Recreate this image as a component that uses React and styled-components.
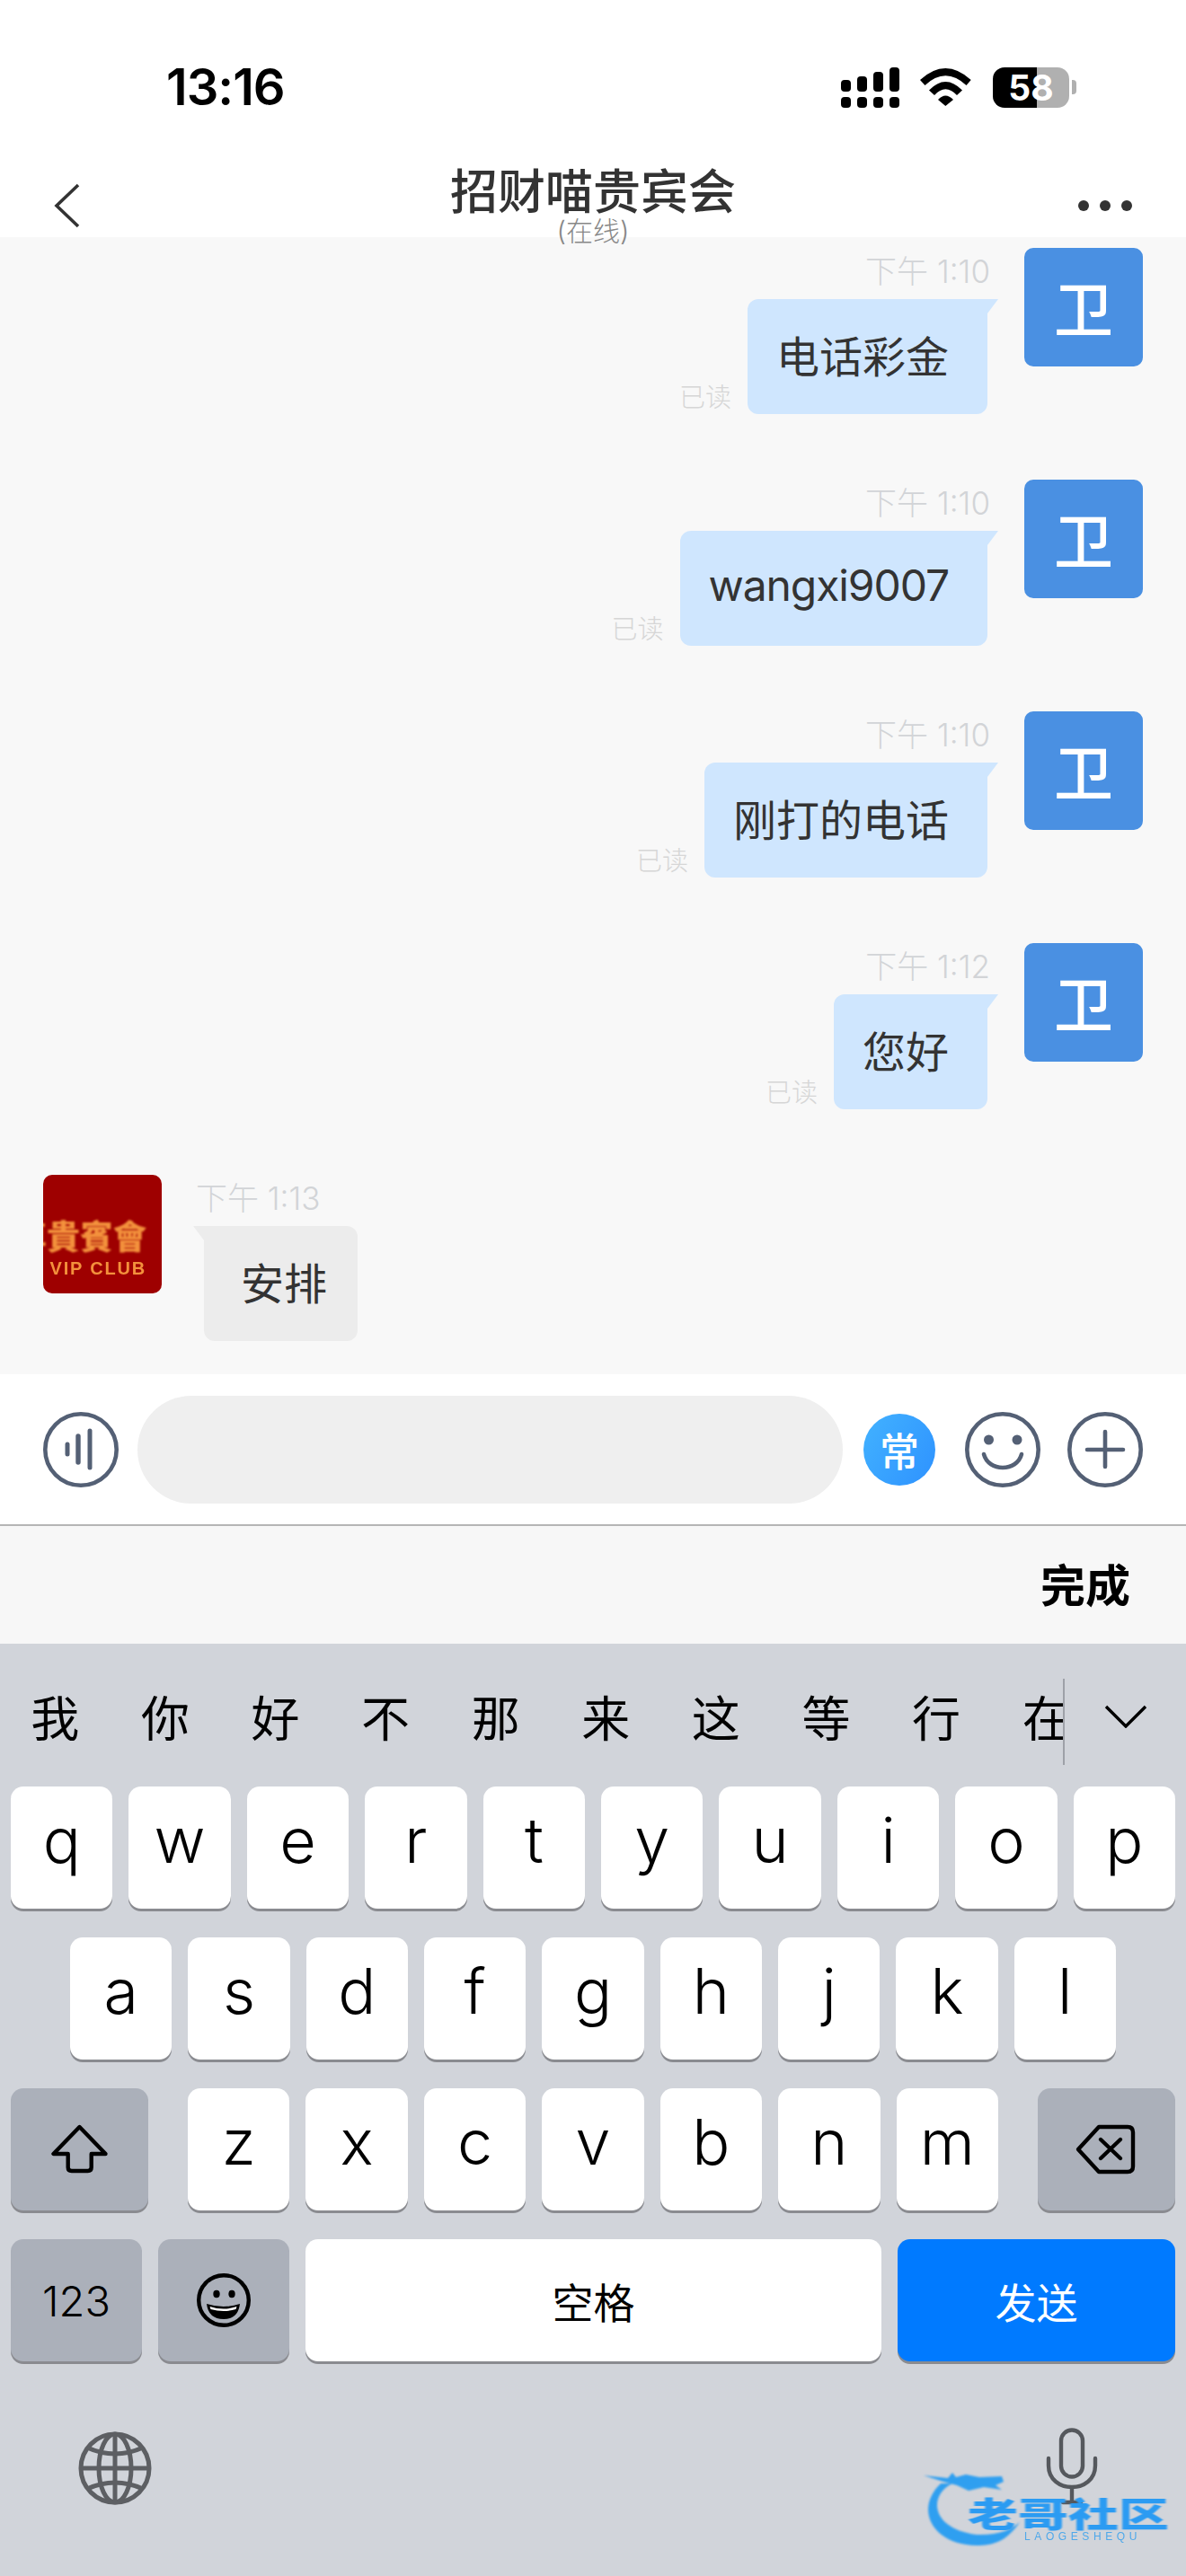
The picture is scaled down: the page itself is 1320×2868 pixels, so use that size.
import React from "react";
import styled, { createGlobalStyle } from "styled-components";

const CJK = `Inter, "Noto Sans CJK SC", sans-serif`;

const GlobalStyle = createGlobalStyle`
  html, body {
    margin: 0;
    padding: 0;
    background: #fff;
  }
  * {
    box-sizing: border-box;
  }
`;

const messages = [
    { id: 1, time: "下午 1:10", text: "电话彩金" },
    { id: 2, time: "下午 1:10", text: "wangxi9007", latin: true },
    { id: 3, time: "下午 1:10", text: "刚打的电话" },
    { id: 4, time: "下午 1:12", text: "您好" },
];

const candidates = ["我", "你", "好", "不", "那", "来", "这", "等", "行", "在"];

const App = () => {
    return (
        <>
            <GlobalStyle />
            <Page>
                <Header>
                    <StatusBar>
                        <Clock>13:16</Clock>
                        <StatusIcons>
                            <SignalBars>
                                {[13, 17, 22, 27].map((h) => (
                                    <SignalColumn key={h}>
                                        <SignalBar $h={h} />
                                        <SignalBar $h={12} />
                                    </SignalColumn>
                                ))}
                            </SignalBars>
                            <WifiIcon />
                            <BatteryWrap>
                                <Battery $level={58}>58</Battery>
                                <BatteryNub />
                            </BatteryWrap>
                        </StatusIcons>
                    </StatusBar>
                    <Nav>
                        <NavSide>
                            <svg width="30" height="50" viewBox="0 0 30 50" fill="none">
                                <path d="M27 2 L3 25 L27 48" stroke="#333" strokeWidth="3.6" />
                            </svg>
                        </NavSide>
                        <TitleBlock>
                            <Title>招财喵贵宾会</Title>
                            <Subtitle>(在线)</Subtitle>
                        </TitleBlock>
                        <NavSide $right>
                            <Dot />
                            <Dot />
                            <Dot />
                        </NavSide>
                    </Nav>
                </Header>

                <ChatList>
                    {messages.map((m) => (
                        <MessageRow key={m.id} $mine>
                            <MessageBody $mine>
                                <MessageTime>{m.time}</MessageTime>
                                <BubbleLine>
                                    <ReadMark>已读</ReadMark>
                                    <Bubble $mine $latin={m.latin}>
                                        {m.text}
                                    </Bubble>
                                </BubbleLine>
                            </MessageBody>
                            <Avatar>卫</Avatar>
                        </MessageRow>
                    ))}
                    <MessageRow>
                        <VipAvatar>
                            <VipName>尊貴賓會</VipName>
                            <VipClub>VIP CLUB</VipClub>
                        </VipAvatar>
                        <MessageBody>
                            <MessageTime>下午 1:13</MessageTime>
                            <BubbleLine>
                                <Bubble>安排</Bubble>
                            </BubbleLine>
                        </MessageBody>
                    </MessageRow>
                </ChatList>

                <InputBar>
                    <VoiceIcon />
                    <InputField />
                    <Coin>常</Coin>
                    <SmileIcon />
                    <PlusIcon />
                </InputBar>

                <DoneBar>完成</DoneBar>

                <Keyboard>
                    <CandidateRow>
                        <CandidateStrip>
                            {candidates.map((c) => (
                                <Candidate key={c}>{c}</Candidate>
                            ))}
                        </CandidateStrip>
                        <CandidateMore>
                            <svg width="48" height="26" viewBox="0 0 48 26" fill="none">
                                <path d="M2 2 L24 24 L46 2" stroke="#000" strokeWidth="3.4" />
                            </svg>
                        </CandidateMore>
                    </CandidateRow>

                    <KeyRows>
                        <KeyRow>
                            {"qwertyuiop".split("").map((k) => (
                                <LetterKey key={k}>{k}</LetterKey>
                            ))}
                        </KeyRow>
                        <KeyRow $inset={78}>
                            {"asdfghjkl".split("").map((k) => (
                                <LetterKey key={k}>{k}</LetterKey>
                            ))}
                        </KeyRow>
                        <KeyRow>
                            <FnKey $w={153} $mr={26}>
                                <ShiftIcon />
                            </FnKey>
                            {"zxcvbnm".split("").map((k) => (
                                <LetterKey key={k}>{k}</LetterKey>
                            ))}
                            <FnKey $w={153} $ml={26}>
                                <BackspaceIcon />
                            </FnKey>
                        </KeyRow>
                        <KeyRow>
                            <FnKey $w={146}>123</FnKey>
                            <FnKey $w={146}>
                                <EmojiIcon />
                            </FnKey>
                            <SpaceKey>空格</SpaceKey>
                            <SendKey>发送</SendKey>
                        </KeyRow>
                    </KeyRows>

                    <BottomRow>
                        <GlobeIcon />
                        <MicIcon />
                    </BottomRow>

                    <Watermark>
                        <DragonIcon />
                        <WatermarkName>老哥社区</WatermarkName>
                        <WatermarkLatin>LAOGESHEQU</WatermarkLatin>
                    </Watermark>
                </Keyboard>
            </Page>
        </>
    );
};

export default App;

//----> icons
const WifiIcon = () => (
    <svg width="58" height="44" viewBox="0 0 58 44" fill="#000">
        <path d="M0 14 Q28.3 -12 56.7 14 L51.5 20 Q28.3 -1.4 5.5 20 Z" />
        <path d="M10 25.5 Q28.3 6.5 47 25.5 L41 31 Q28.3 17.5 16 31 Z" />
        <path d="M20 36 Q28.3 27 37 36 L28.3 43 Z" />
    </svg>
);

const VoiceIcon = () => (
    <svg width="84" height="84" viewBox="0 0 84 84" fill="none" stroke="#546075" strokeLinecap="round">
        <circle cx="42" cy="42" r="39.7" strokeWidth="4.6" />
        <path d="M27 36 V47" strokeWidth="5" />
        <path d="M39 27 V56" strokeWidth="5.4" />
        <path d="M52 21 V62" strokeWidth="5" />
    </svg>
);

const SmileIcon = () => (
    <svg width="84" height="84" viewBox="0 0 84 84" fill="none" stroke="#546075" strokeLinecap="round">
        <circle cx="42" cy="42" r="39.7" strokeWidth="4.6" />
        <circle cx="26.5" cy="31" r="5.5" fill="#546075" stroke="none" />
        <circle cx="58" cy="31" r="5.5" fill="#546075" stroke="none" />
        <path d="M21 47 C26 67 58 67 63 47" strokeWidth="4.6" />
    </svg>
);

const PlusIcon = () => (
    <svg width="84" height="84" viewBox="0 0 84 84" fill="none" stroke="#546075" strokeLinecap="round">
        <circle cx="42" cy="42" r="39.7" strokeWidth="4.6" />
        <path d="M22 42 H62 M42 22 V61" strokeWidth="4.6" />
    </svg>
);

const ShiftIcon = () => (
    <svg width="64" height="56" viewBox="0 0 64 56" fill="none" stroke="#000" strokeWidth="4.4" strokeLinejoin="round">
        <path d="M31.5 3 L2.5 33 H18.7 V48 Q18.7 52 22.7 52 H40.7 Q44.7 52 44.7 48 V33 H60.5 Z" />
    </svg>
);

const BackspaceIcon = () => (
    <svg width="68" height="56" viewBox="0 0 68 56" fill="none" stroke="#000" strokeWidth="4.4" strokeLinejoin="round" strokeLinecap="round">
        <path d="M26 3 H58 Q64 3 64 9 V47 Q64 53 58 53 H26 L3 28 Z" />
        <path d="M28 17 L50 38 M50 17 L28 38" />
    </svg>
);

const EmojiIcon = () => (
    <svg width="62" height="62" viewBox="0 0 62 62" fill="none">
        <circle cx="31" cy="31" r="27.8" stroke="#000" strokeWidth="4.4" />
        <ellipse cx="23" cy="24" rx="3.7" ry="4.2" fill="#000" />
        <ellipse cx="40" cy="24" rx="3.7" ry="4.2" fill="#000" />
        <path d="M12 35 Q31 41 49 35 Q47 52 31 52 Q14 52 12 35 Z" fill="#000" />
        <path d="M15.5 38 Q31 43 45.5 38 L44.5 41 Q31 45 16.5 41 Z" fill="#fff" />
    </svg>
);

const GlobeIcon = () => (
    <svg width="82" height="82" viewBox="0 0 82 82" fill="none" stroke="#5d5f63" strokeWidth="5">
        <circle cx="41" cy="41" r="38" />
        <ellipse cx="41" cy="41" rx="18" ry="38" />
        <path d="M41 3 V79 M3 41 H79" />
        <path d="M10 18 Q41 32 72 18 M10 64 Q41 50 72 64" />
    </svg>
);

const MicIcon = () => (
    <svg width="58" height="86" viewBox="0 0 58 86" fill="none" stroke="#55585d" strokeWidth="4.4" strokeLinecap="round">
        <rect x="17" y="2.5" width="24" height="52" rx="12" />
        <path d="M3 34 V42 C3 74 55 74 55 42 V34" />
        <path d="M29 67 V83 M19 83 H39" />
    </svg>
);

const DragonIcon = () => (
    <DragonSvg width="130" height="95" viewBox="0 0 130 95" fill="#2f9ff0">
        <path d="M40 20 C14 32 14 70 67 77 C90 78 105 72 115 63 C100 85 85 89 67 89 C20 89 -4 50 27 20 Z" />
        <path d="M8 11 L35 14 L40 8 L44 13 L55 10 L70 13 L95 12 L97 18 L88 22 L95 27 L75 24 L58 28 L45 22 L30 18 Z" />
    </DragonSvg>
);

//----> layout
const Page = styled.div`
  width: 1320px;
  height: 2868px;
  overflow: hidden;
  display: flex;
  flex-direction: column;
  font-family: ${CJK};
  background: #fff;
`;

const Header = styled.header`
  height: 264px;
  flex: none;
  background: #fff;
  padding-top: 74px;
  position: relative;
  z-index: 1;
`;

const StatusBar = styled.div`
  height: 46px;
  padding: 0 122px 0 185px;
  display: flex;
  align-items: center;
  justify-content: space-between;
`;

const Clock = styled.div`
  font-size: 56px;
  font-weight: 600;
  letter-spacing: -1px;
  color: #000;
`;

const StatusIcons = styled.div`
  display: flex;
  align-items: center;
  gap: 23px;
`;

const SignalBars = styled.div`
  display: flex;
  gap: 7px;
`;

const SignalColumn = styled.div`
  width: 11px;
  height: 45px;
  display: flex;
  flex-direction: column;
  justify-content: flex-end;
  gap: 6px;
`;

const SignalBar = styled.div`
  height: ${(p) => p.$h}px;
  background: #000;
  border-radius: 4px;
`;

const BatteryWrap = styled.div`
  display: flex;
  align-items: center;
  gap: 3px;
`;

const Battery = styled.div`
  width: 85px;
  height: 45px;
  border-radius: 13px;
  background: linear-gradient(
    to right,
    #000 ${(p) => p.$level}%,
    #b0b0b0 ${(p) => p.$level}%
  );
  color: #fff;
  font-size: 39px;
  font-weight: 700;
  line-height: 45px;
  text-align: center;
`;

const BatteryNub = styled.div`
  width: 5px;
  height: 16px;
  background: #b0b0b0;
  border-radius: 0 4px 4px 0;
`;

const Nav = styled.div`
  margin-top: 66px;
  height: 78px;
  padding: 0 60px;
  display: grid;
  grid-template-columns: 1fr auto 1fr;
  align-items: start;
`;

const NavSide = styled.div`
  align-self: center;
  display: flex;
  align-items: center;
  justify-content: ${(p) => (p.$right ? "flex-end" : "flex-start")};
  gap: 12px;
`;

const Dot = styled.span`
  width: 12px;
  height: 12px;
  border-radius: 50%;
  background: #333;
`;

const TitleBlock = styled.div`
  text-align: center;
`;

const Title = styled.div`
  font-size: 53px;
  line-height: 56px;
  font-weight: 500;
  color: #333;
`;

const Subtitle = styled.div`
  font-size: 30px;
  line-height: 30px;
  font-weight: 300;
  color: #888;
`;

const ChatList = styled.main`
  height: 1266px;
  flex: none;
  background: #f8f8f8;
  padding-top: 12px;
  display: flex;
  flex-direction: column;
  gap: 73px;
`;

const MessageRow = styled.div`
  display: flex;
  justify-content: ${(p) => (p.$mine ? "flex-end" : "flex-start")};
  gap: ${(p) => (p.$mine ? 41 : 38)}px;
  padding: 0 48px;
`;

const MessageBody = styled.div`
  display: flex;
  flex-direction: column;
  align-items: ${(p) => (p.$mine ? "flex-end" : "flex-start")};
`;

const MessageTime = styled.div`
  height: 57px;
  padding-top: 6px;
  margin-right: -3px;
  font-size: 35px;
  line-height: 40px;
  font-weight: 300;
  color: #d2d4d7;
  white-space: nowrap;
`;

const BubbleLine = styled.div`
  display: flex;
  align-items: flex-end;
  gap: 18px;
`;

const ReadMark = styled.div`
  font-size: 29px;
  line-height: 40px;
  font-weight: 300;
  color: #d6d6d6;
  margin-bottom: -2px;
`;

const Bubble = styled.div`
  position: relative;
  height: 128px;
  padding: ${(p) => (p.$mine ? "0 43px 7px 32px" : "0 34px 7px 41px")};
  margin-left: ${(p) => (p.$mine ? 0 : 9)}px;
  display: flex;
  align-items: center;
  font-size: 48px;
  letter-spacing: ${(p) => (p.$latin ? "-1.1px" : "0")};
  font-weight: 400;
  color: #333;
  white-space: nowrap;
  background: ${(p) => (p.$mine ? "#cfe6fe" : "#ececec")};
  border-radius: ${(p) => (p.$mine ? "12px 0 12px 12px" : "0 12px 12px 12px")};

  &::after {
    content: "";
    position: absolute;
    top: 0;
    ${(p) => (p.$mine ? "right: -12px;" : "left: -12px;")}
    border-top: 16px solid ${(p) => (p.$mine ? "#cfe6fe" : "#ececec")};
    ${(p) =>
      p.$mine
        ? "border-right: 12px solid transparent;"
        : "border-left: 12px solid transparent;"}
  }
`;

const Avatar = styled.div`
  width: 132px;
  height: 132px;
  flex: none;
  padding-bottom: 4px;
  border-radius: 10px;
  background: #4a90e2;
  color: #fff;
  font-size: 66px;
  font-weight: 500;
  display: flex;
  align-items: center;
  justify-content: center;
`;

const VipAvatar = styled.div`
  width: 132px;
  height: 132px;
  flex: none;
  border-radius: 10px;
  background: #9e0000;
  overflow: hidden;
  padding: 48px 17px 0 0;
  display: flex;
  flex-direction: column;
  align-items: flex-end;
  color: #f3913c;
`;

const VipName = styled.div`
  font-size: 37px;
  line-height: 44px;
  font-weight: 900;
  white-space: nowrap;
  filter: blur(0.8px);
`;

const VipClub = styled.div`
  margin-top: 3px;
  font-family: "Liberation Sans", sans-serif;
  font-size: 20px;
  line-height: 18px;
  font-weight: 700;
  letter-spacing: 1.8px;
  white-space: nowrap;
  filter: blur(0.5px);
`;

const InputBar = styled.div`
  height: 167px;
  flex: none;
  background: #fff;
  padding: 0 48px;
  display: flex;
  align-items: center;
  border-bottom: 2px solid #b5b5b5;
  box-sizing: content-box;

  & > svg {
    flex: none;
  }
  & > svg:first-child {
    margin-right: 21px;
  }
  & > svg:nth-child(4) {
    margin-right: 30px;
  }
`;

const InputField = styled.div`
  width: 785px;
  height: 120px;
  border-radius: 60px;
  background: #efefef;
  margin-right: 23px;
`;

const Coin = styled.div`
  width: 80px;
  height: 80px;
  margin-right: 33px;
  border-radius: 50%;
  background: linear-gradient(120deg, #42b2ff, #2e92ff);
  color: #fff;
  font-size: 44px;
  font-weight: 500;
  display: flex;
  align-items: center;
  justify-content: center;
`;

const DoneBar = styled.div`
  height: 131px;
  flex: none;
  background: #f7f7f7;
  padding: 0 62px 6px 0;
  display: flex;
  align-items: center;
  justify-content: flex-end;
  font-size: 50px;
  font-weight: 700;
  color: #000;
`;

const Keyboard = styled.div`
  flex: 1;
  position: relative;
  background: #d1d4da;
  padding-top: 39px;
`;

const CandidateRow = styled.div`
  height: 96px;
  display: flex;
  align-items: stretch;
`;

const CandidateStrip = styled.div`
  width: 1185px;
  flex: none;
  display: flex;
  overflow: hidden;
  border-right: 2px solid #9ea1a8;
`;

const Candidate = styled.div`
  width: 122.6px;
  flex: none;
  padding-bottom: 14px;
  display: flex;
  align-items: center;
  justify-content: center;
  font-size: 54px;
  color: #000;
`;

const CandidateMore = styled.div`
  flex: 1;
  display: flex;
  align-items: center;
  justify-content: center;
  padding-bottom: 12px;
`;

const KeyRows = styled.div`
  margin-top: 24px;
  padding: 0 12px;
  display: flex;
  flex-direction: column;
  gap: 32px;
`;

const KeyRow = styled.div`
  display: flex;
  gap: 18px;
  padding: 0 ${(p) => p.$inset || 0}px 0 ${(p) => p.$inset || 0}px;
  margin: 0 ${(p) => (p.$inset ? -12 : 0)}px;
`;

const BaseKey = styled.div`
  height: 136px;
  border-radius: 14px;
  box-shadow: 0 3px 0 #8a8b90;
  display: flex;
  align-items: center;
  justify-content: center;
  color: #000;
`;

const LetterKey = styled(BaseKey)`
  flex: 1 1 0;
  background: #fff;
  font-size: 70px;
  font-weight: 300;
  padding-bottom: 18px;
`;

const FnKey = styled(BaseKey)`
  width: ${(p) => p.$w}px;
  flex: none;
  margin-right: ${(p) => p.$mr || 0}px;
  margin-left: ${(p) => p.$ml || 0}px;
  background: #abb0ba;
  font-size: 47px;
  font-weight: 300;
`;

const SpaceKey = styled(BaseKey)`
  flex: 1;
  background: #fff;
  font-size: 46px;
`;

const SendKey = styled(BaseKey)`
  width: 309px;
  flex: none;
  background: #007aff;
  color: #fff;
  font-size: 46px;
`;

const BottomRow = styled.div`
  margin-top: 74px;
  padding: 4px 98px 0 87px;
  display: flex;
  align-items: flex-start;
  justify-content: space-between;

  & > svg:last-child {
    margin-top: -4px;
  }
`;

const Watermark = styled.div`
  position: absolute;
  left: 1020px;
  top: 915px;
  width: 290px;
  height: 95px;
`;

const DragonSvg = styled.svg`
  position: absolute;
  left: 0;
  top: 0;
  filter: blur(0.8px);
`;

const WatermarkName = styled.div`
  position: absolute;
  left: 57px;
  top: 24px;
  font-size: 56px;
  line-height: 60px;
  font-weight: 900;
  white-space: nowrap;
  transform: scaleY(0.68);
  color: #2b9bf2;
  filter: blur(0.8px);
`;

const WatermarkLatin = styled.div`
  position: absolute;
  left: 120px;
  top: 73px;
  font-family: "Liberation Sans", sans-serif;
  font-size: 12px;
  line-height: 12px;
  letter-spacing: 4.6px;
  color: #4ea8ea;
  white-space: nowrap;
  filter: blur(0.5px);
`;
